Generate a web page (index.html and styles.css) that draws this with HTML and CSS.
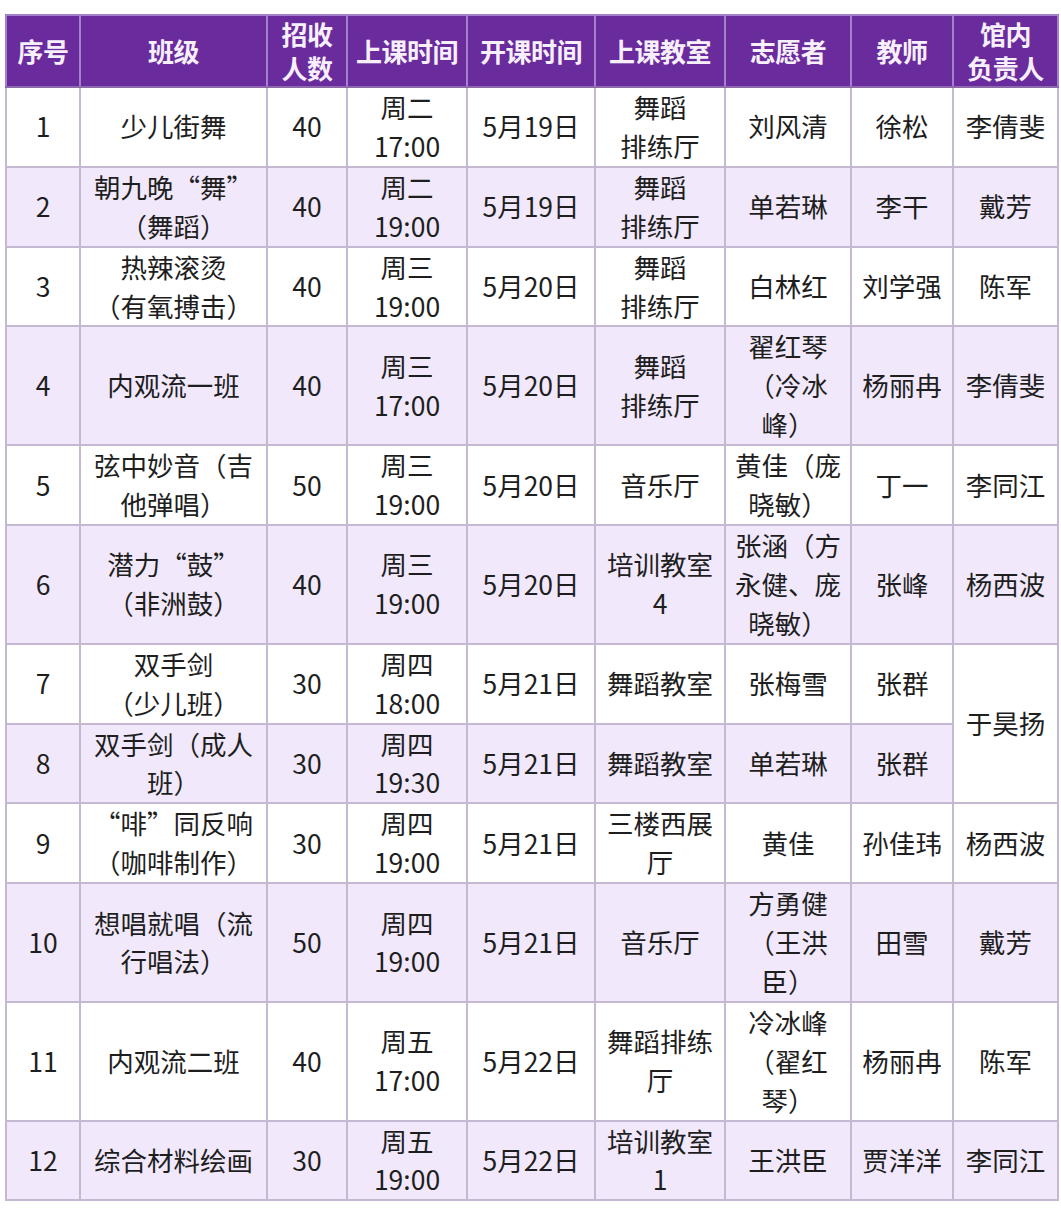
FILE: index.html
```html
<!DOCTYPE html>
<html lang="zh-CN">
<head>
<meta charset="utf-8">
<title>课程表</title>
<link rel="stylesheet" href="styles.css">
</head>
<body>
<table class="schedule">
  <colgroup>
    <col class="c1"><col class="c2"><col class="c3"><col class="c4"><col class="c5"><col class="c6"><col class="c7"><col class="c8"><col class="c9">
  </colgroup>
  <thead>
    <tr>
      <th>序号</th><th>班级</th><th>招收<br>人数</th><th>上课时间</th><th>开课时间</th><th>上课教室</th><th>志愿者</th><th>教师</th><th>馆内<br>负责人</th>
    </tr>
  </thead>
  <tbody>
    <tr>
      <td>1</td><td>少儿街舞</td><td>40</td><td>周二<br>17:00</td><td>5月19日</td><td>舞蹈<br>排练厅</td><td>刘风清</td><td>徐松</td><td>李倩斐</td>
    </tr>
    <tr class="alt">
      <td>2</td><td>朝九晚“舞”<br>（舞蹈）</td><td>40</td><td>周二<br>19:00</td><td>5月19日</td><td>舞蹈<br>排练厅</td><td>单若琳</td><td>李干</td><td>戴芳</td>
    </tr>
    <tr>
      <td>3</td><td>热辣滚烫<br>（有氧搏击）</td><td>40</td><td>周三<br>19:00</td><td>5月20日</td><td>舞蹈<br>排练厅</td><td>白林红</td><td>刘学强</td><td>陈军</td>
    </tr>
    <tr class="alt">
      <td>4</td><td>内观流一班</td><td>40</td><td>周三<br>17:00</td><td>5月20日</td><td>舞蹈<br>排练厅</td><td>翟红琴<br>（冷冰<br>峰）</td><td>杨丽冉</td><td>李倩斐</td>
    </tr>
    <tr>
      <td>5</td><td>弦中妙音（吉<br>他弹唱）</td><td>50</td><td>周三<br>19:00</td><td>5月20日</td><td>音乐厅</td><td>黄佳（庞<br>晓敏）</td><td>丁一</td><td>李同江</td>
    </tr>
    <tr class="alt">
      <td>6</td><td>潜力“鼓”<br>（非洲鼓）</td><td>40</td><td>周三<br>19:00</td><td>5月20日</td><td>培训教室<br>4</td><td>张涵（方<br>永健、庞<br>晓敏）</td><td>张峰</td><td>杨西波</td>
    </tr>
    <tr>
      <td>7</td><td>双手剑<br>（少儿班）</td><td>30</td><td>周四<br>18:00</td><td>5月21日</td><td>舞蹈教室</td><td>张梅雪</td><td>张群</td><td rowspan="2" class="merged">于昊扬</td>
    </tr>
    <tr class="alt">
      <td>8</td><td>双手剑（成人<br>班）</td><td>30</td><td>周四<br>19:30</td><td>5月21日</td><td>舞蹈教室</td><td>单若琳</td><td>张群</td>
    </tr>
    <tr>
      <td>9</td><td>“啡”同反响<br>（咖啡制作）</td><td>30</td><td>周四<br>19:00</td><td>5月21日</td><td>三楼西展<br>厅</td><td>黄佳</td><td>孙佳玮</td><td>杨西波</td>
    </tr>
    <tr class="alt">
      <td>10</td><td>想唱就唱（流<br>行唱法）</td><td>50</td><td>周四<br>19:00</td><td>5月21日</td><td>音乐厅</td><td>方勇健<br>（王洪<br>臣）</td><td>田雪</td><td>戴芳</td>
    </tr>
    <tr>
      <td>11</td><td>内观流二班</td><td>40</td><td>周五<br>17:00</td><td>5月22日</td><td>舞蹈排练<br>厅</td><td>冷冰峰<br>（翟红<br>琴）</td><td>杨丽冉</td><td>陈军</td>
    </tr>
    <tr class="alt">
      <td>12</td><td>综合材料绘画</td><td>30</td><td>周五<br>19:00</td><td>5月22日</td><td>培训教室<br>1</td><td>王洪臣</td><td>贾洋洋</td><td>李同江</td>
    </tr>
  </tbody>
</table>
</body>
</html>
```
FILE: styles.css
```css
html, body {
  margin: 0;
  background: #ffffff;
}
body {
  padding: 14px 4px 0 5px;
  font-family: "Noto Sans CJK SC", "Noto Sans", sans-serif;
}
.schedule {
  border-collapse: collapse;
  table-layout: fixed;
  width: 1052px;
  border: 2px solid #807a88;
}
.c1 { width: 74px; }
.c2 { width: 187px; }
.c3 { width: 80px; }
.c4 { width: 120px; }
.c5 { width: 128px; }
.c6 { width: 130px; }
.c7 { width: 126px; }
.c8 { width: 102px; }
.c9 { width: 105px; }
.schedule th {
  background: #6a2b9d;
  color: #f7f0fc;
  font-weight: 700;
  font-size: 26px;
  line-height: 34px;
  height: 70px;
  padding: 0;
  border: 2px solid #a47fcb;
  border-bottom-color: #8c6aab;
  text-align: center;
  vertical-align: middle;
  white-space: nowrap;
  letter-spacing: -0.5px;
}
.schedule td {
  font-size: 26.5px;
  line-height: 38.9px;
  color: #1e1e1e;
  padding: 0;
  border: 2px solid #c5b8d3;
  text-align: center;
  vertical-align: middle;
  white-space: nowrap;
  background: #ffffff;
}
.schedule tr.alt td {
  background: #f1e9fb;
}
.schedule tr.alt td.merged,
.schedule td.merged {
  background: #ffffff;
}
```
